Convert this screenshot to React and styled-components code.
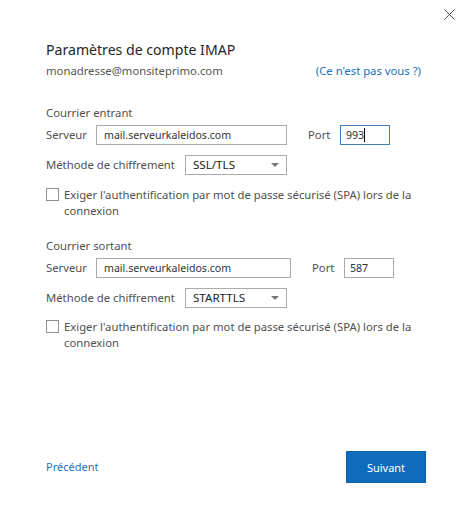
import styled, { createGlobalStyle } from "styled-components";

const GlobalStyle = createGlobalStyle`
  html, body {
    margin: 0;
    padding: 0;
    background: #ffffff;
  }
  body {
    font-family: "Noto Sans", "Open Sans", sans-serif;
    color: #444444;
  }
`;

const App = () => {
  return (
    <>
      <GlobalStyle />
      <Dialog>
        <CloseButton aria-label="Fermer">
          <svg width="11" height="11" viewBox="0 0 11 11">
            <path d="M0.5 0.5 L10.5 10.5 M10.5 0.5 L0.5 10.5" stroke="#555" strokeWidth="1" />
          </svg>
        </CloseButton>

        <Title>Paramètres de compte IMAP</Title>
        <AccountRow>
          <span>monadresse@monsiteprimo.com</span>
          <Link href="#">(Ce n'est pas vous ?)</Link>
        </AccountRow>

        <Section>
          <SectionTitle>Courrier entrant</SectionTitle>
          <FieldRow>
            <FieldLabel $width={50}>Serveur</FieldLabel>
            <TextBox $width={191}>mail.serveurkaleidos.com</TextBox>
            <FieldLabel $width={32} $gap={21}>Port</FieldLabel>
            <PortBox $focused>
              993
              <Caret />
            </PortBox>
          </FieldRow>
          <FieldRow $top={10}>
            <FieldLabel $width={139}>Méthode de chiffrement</FieldLabel>
            <SelectBox>
              <span>SSL/TLS</span>
              <Arrow />
            </SelectBox>
          </FieldRow>
          <CheckRow>
            <CheckBox />
            <CheckText>
              Exiger l'authentification par mot de passe sécurisé (SPA) lors de la connexion
            </CheckText>
          </CheckRow>
        </Section>

        <Section $top={19}>
          <SectionTitle>Courrier sortant</SectionTitle>
          <FieldRow>
            <FieldLabel $width={50}>Serveur</FieldLabel>
            <TextBox $width={195}>mail.serveurkaleidos.com</TextBox>
            <FieldLabel $width={32} $gap={21}>Port</FieldLabel>
            <PortBox>587</PortBox>
          </FieldRow>
          <FieldRow $top={10}>
            <FieldLabel $width={139}>Méthode de chiffrement</FieldLabel>
            <SelectBox>
              <span>STARTTLS</span>
              <Arrow />
            </SelectBox>
          </FieldRow>
          <CheckRow $top={11}>
            <CheckBox />
            <CheckText>
              Exiger l'authentification par mot de passe sécurisé (SPA) lors de la connexion
            </CheckText>
          </CheckRow>
        </Section>

        <Footer>
          <Link href="#" $large>Précédent</Link>
          <PrimaryButton>Suivant</PrimaryButton>
        </Footer>
      </Dialog>
    </>
  );
};

export default App;

const Dialog = styled.div`
  position: relative;
  box-sizing: border-box;
  height: 100vh;
  display: flex;
  flex-direction: column;
  padding: 40px 45px 46px 46px;
  font-size: 11.3px;
  line-height: 16px;
`;

const CloseButton = styled.button`
  position: absolute;
  top: 8px;
  right: 15px;
  width: 13px;
  height: 13px;
  padding: 1px;
  border: none;
  background: transparent;
  display: flex;
  align-items: center;
  justify-content: center;
  cursor: pointer;
`;

const Title = styled.h1`
  margin: 0;
  font-size: 14.1px;
  line-height: 20px;
  font-weight: 400;
  color: #262626;
`;

const AccountRow = styled.div`
  display: flex;
  justify-content: space-between;
  align-items: baseline;
  margin-top: 3px;
  padding-right: 5px;
  color: #555555;
`;

const Link = styled.a`
  color: #1e70bb;
  text-decoration: none;
  font-size: ${(p) => (p.$large ? "11px" : "11.3px")};
`;

const Section = styled.section`
  margin-top: ${(p) => p.$top ?? 26}px;
  display: flex;
  flex-direction: column;
`;

const SectionTitle = styled.div`
  color: #505050;
`;

const FieldRow = styled.div`
  display: flex;
  align-items: center;
  margin-top: ${(p) => p.$top ?? 4}px;
  height: 20px;
`;

const FieldLabel = styled.span`
  flex: none;
  width: ${(p) => p.$width}px;
  margin-left: ${(p) => p.$gap ?? 0}px;
  color: #505050;
`;

const TextBox = styled.div`
  box-sizing: border-box;
  width: ${(p) => p.$width}px;
  height: 20px;
  border: 1px solid #ababab;
  padding: 0 7px;
  display: flex;
  align-items: center;
  font-size: 10.6px;
  color: #333333;
`;

const PortBox = styled.div`
  box-sizing: border-box;
  width: 50px;
  height: 20px;
  border: 1px solid ${(p) => (p.$focused ? "#3f7fb6" : "#ababab")};
  padding: 0 5px;
  display: flex;
  align-items: center;
  font-size: 10.6px;
  color: #333333;
`;

const Caret = styled.span`
  display: inline-block;
  width: 1px;
  height: 14px;
  background: #000000;
`;

const SelectBox = styled.div`
  box-sizing: border-box;
  width: 102px;
  height: 20px;
  border: 1px solid #ababab;
  padding: 0 7px 0 7px;
  display: flex;
  align-items: center;
  justify-content: space-between;
  font-size: 11.6px;
  color: #222222;
`;

const Arrow = styled.span`
  width: 0;
  height: 0;
  border-left: 4px solid transparent;
  border-right: 4px solid transparent;
  border-top: 4px solid #777777;
`;

const CheckRow = styled.label`
  display: flex;
  align-items: flex-start;
  margin-top: ${(p) => p.$top ?? 12}px;
  gap: 5px;
`;

const CheckBox = styled.span`
  flex: none;
  box-sizing: border-box;
  width: 13px;
  height: 13px;
  margin-top: 1px;
  border: 1px solid #8e8e8e;
  background: #ffffff;
`;

const CheckText = styled.span`
  color: #505050;
  max-width: 352px;
`;

const Footer = styled.div`
  margin-top: auto;
  display: flex;
  justify-content: space-between;
  align-items: center;
`;

const PrimaryButton = styled.button`
  box-sizing: border-box;
  width: 80px;
  height: 32px;
  border: 1px solid #0e5ea8;
  background: #0f6cbd;
  color: #ffffff;
  font-family: inherit;
  font-size: 11px;
  cursor: pointer;
`;
